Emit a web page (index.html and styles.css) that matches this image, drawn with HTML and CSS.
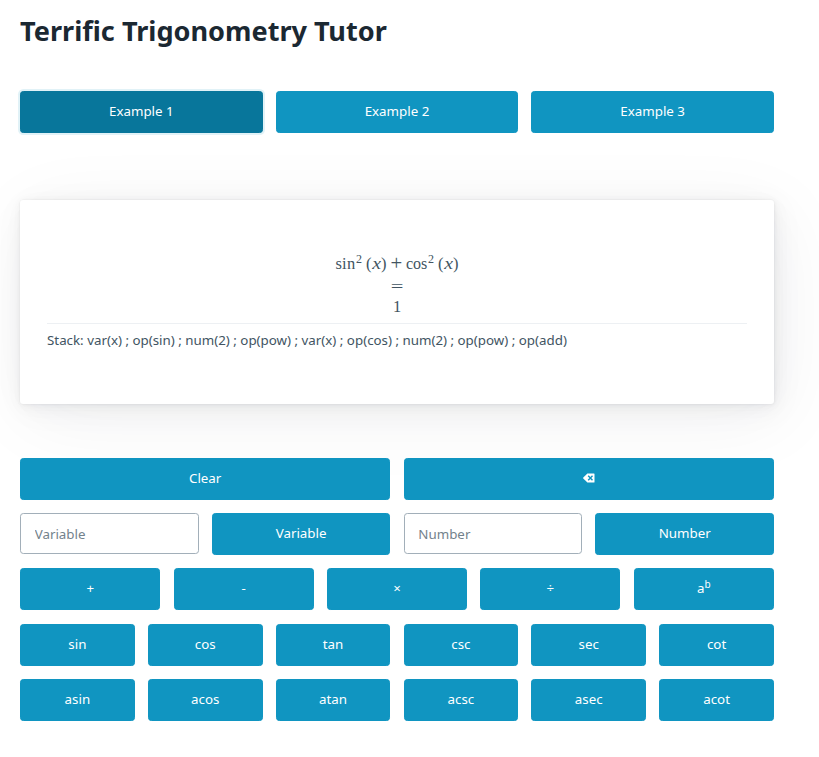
FILE: index.html
```html
<!DOCTYPE html>
<html lang="en">
<head>
<meta charset="utf-8">
<title>Terrific Trigonometry Tutor</title>
<link rel="stylesheet" href="styles.css">
</head>
<body>
<main>
<h1>Terrific Trigonometry Tutor</h1>
<div class="grid three examples"><button class="focused">Example 1</button><button>Example 2</button><button>Example 3</button></div>
<article>
<div class="math">
<div class="expr"><span class="fn">sin</span><sup>2</sup><span class="group">(<i>x</i>)</span><span class="plus">+</span><span class="fn cos">cos</span><sup>2</sup><span class="group">(<i>x</i>)</span></div>
<div class="equals">=</div>
<div class="one">1</div>
</div>
<hr>
<div class="stack">Stack: var(x) ; op(sin) ; num(2) ; op(pow) ; var(x) ; op(cos) ; num(2) ; op(pow) ; op(add)</div>
</article>
<section class="keys">
<div class="grid two"><button>Clear</button><button aria-label="Backspace"><svg class="back" viewBox="0 0 12 10"><path fill="currentColor" d="M4.400.5H11Q11.500 .5 11.500 1V9Q11.500 9.500 11 9.500H4.400L.3 5.500Q-.2 5 .3 4.500Z"/><path class="cross" d="M5.200 2.800L9.500 7.200M9.500 2.800L5.200 7.200"/></svg></button></div>
<div class="grid four"><input placeholder="Variable"><button>Variable</button><input placeholder="Number"><button>Number</button></div>
<div class="grid five"><button>+</button><button>-</button><button>×</button><button>÷</button><button>a<sup>b</sup></button></div>
<div class="grid six"><button>sin</button><button>cos</button><button>tan</button><button>csc</button><button>sec</button><button>cot</button></div>
<div class="grid six"><button>asin</button><button>acos</button><button>atan</button><button>acsc</button><button>asec</button><button>acot</button></div>
</section>
</main>
</body>
</html>
```
FILE: styles.css
```css
* { box-sizing: border-box; }
body { margin: 0; background: #fff; color: #415462; font: 13.33px/20px "Noto Sans", sans-serif; overflow: hidden; }
main { width: 754px; margin: 0 0 0 20px; padding-top: 13px; }
h1 { margin: 0; font-size: 27.12px; line-height: 36px; font-weight: 700; color: #1b2832; }
.grid { display: grid; column-gap: 13.33px; }
.two { grid-template-columns: repeat(2, 1fr); }
.three { grid-template-columns: repeat(3, 1fr); column-gap: 13px; }
.four { grid-template-columns: repeat(4, 1fr); }
.five { grid-template-columns: 140px 140px 140px 140px 140px; column-gap: 13.4px; padding-left: .2px; }
.six { grid-template-columns: repeat(6, 1fr); column-gap: 13.05px; }
.examples { margin-top: 42px; }
button, input { width: 100%; min-width: 0; height: 42px; margin: 0; border-radius: 3.33px; font: inherit; padding: 0 14px; }
button { border: 1px solid #1095c1; background: #1095c1; color: #fff; padding-bottom: 2px; }
.focused { background: #08769b; border-color: #08769b; box-shadow: 0 0 0 2px rgba(16,149,193,.125); }
input { height: 41px; border: 1px solid #a2afb9; background: #fff; color: #415462; padding-left: 13.7px; }
input::placeholder { color: #73828c; opacity: 1; }
article {
  height: 204px; margin-top: 67px; padding: 53px 27px; border-radius: 3.33px; background: #fff;
  box-shadow:
    .19px .39px 2.32px rgba(27,40,50,.017),
    .45px .89px 5.36px rgba(27,40,50,.024),
    .83px 1.67px 10px rgba(27,40,50,.03),
    1.5px 3px 18px rgba(27,40,50,.036),
    2.78px 5.56px 33.35px rgba(27,40,50,.043),
    6.67px 13.33px 80px rgba(27,40,50,.06),
    0 0 0 .83px rgba(27,40,50,.015);
}
.math { display: grid; grid-template-rows: 22.5px 20px 22px; text-align: center; font: 16px/21px "Liberation Serif", serif; }
.expr { display: flex; justify-content: center; }
.expr sup { width: 6px; font-size: 12px; line-height: 12px; }
.fn { width: 20.5px; text-align: left; font-size: 16.5px; letter-spacing: .2px; }
.cos { width: 22px; font-size: 16px; letter-spacing: 0; }
.group { display: flex; justify-content: space-between; width: 20.5px; margin-left: 4px; font-size: 16.5px; }
.group i { transform: scaleX(1.2); }
.plus, .equals { font-size: 16px; }
.plus { width: 18.5px; margin-right: 1px; transform: scale(1.3); }
.equals { width: 12px; justify-self: center; transform: scaleX(1.4); }
.one { font-size: 16.5px; line-height: 21px; }
hr { height: 1px; border: 0; margin: 5.5px 0 6px; background: #edf0f3; }
.keys { display: grid; row-gap: 13.33px; margin-top: 53.8px; }
.keys .grid { height: 42px; }
.back { display: block; width: 12px; height: 10px; margin: 0 auto; }
.cross { fill: none; stroke: #1095c1; stroke-width: 1.4; }
button sup { font-size: 10px; line-height: 0; vertical-align: 5px; }
```
